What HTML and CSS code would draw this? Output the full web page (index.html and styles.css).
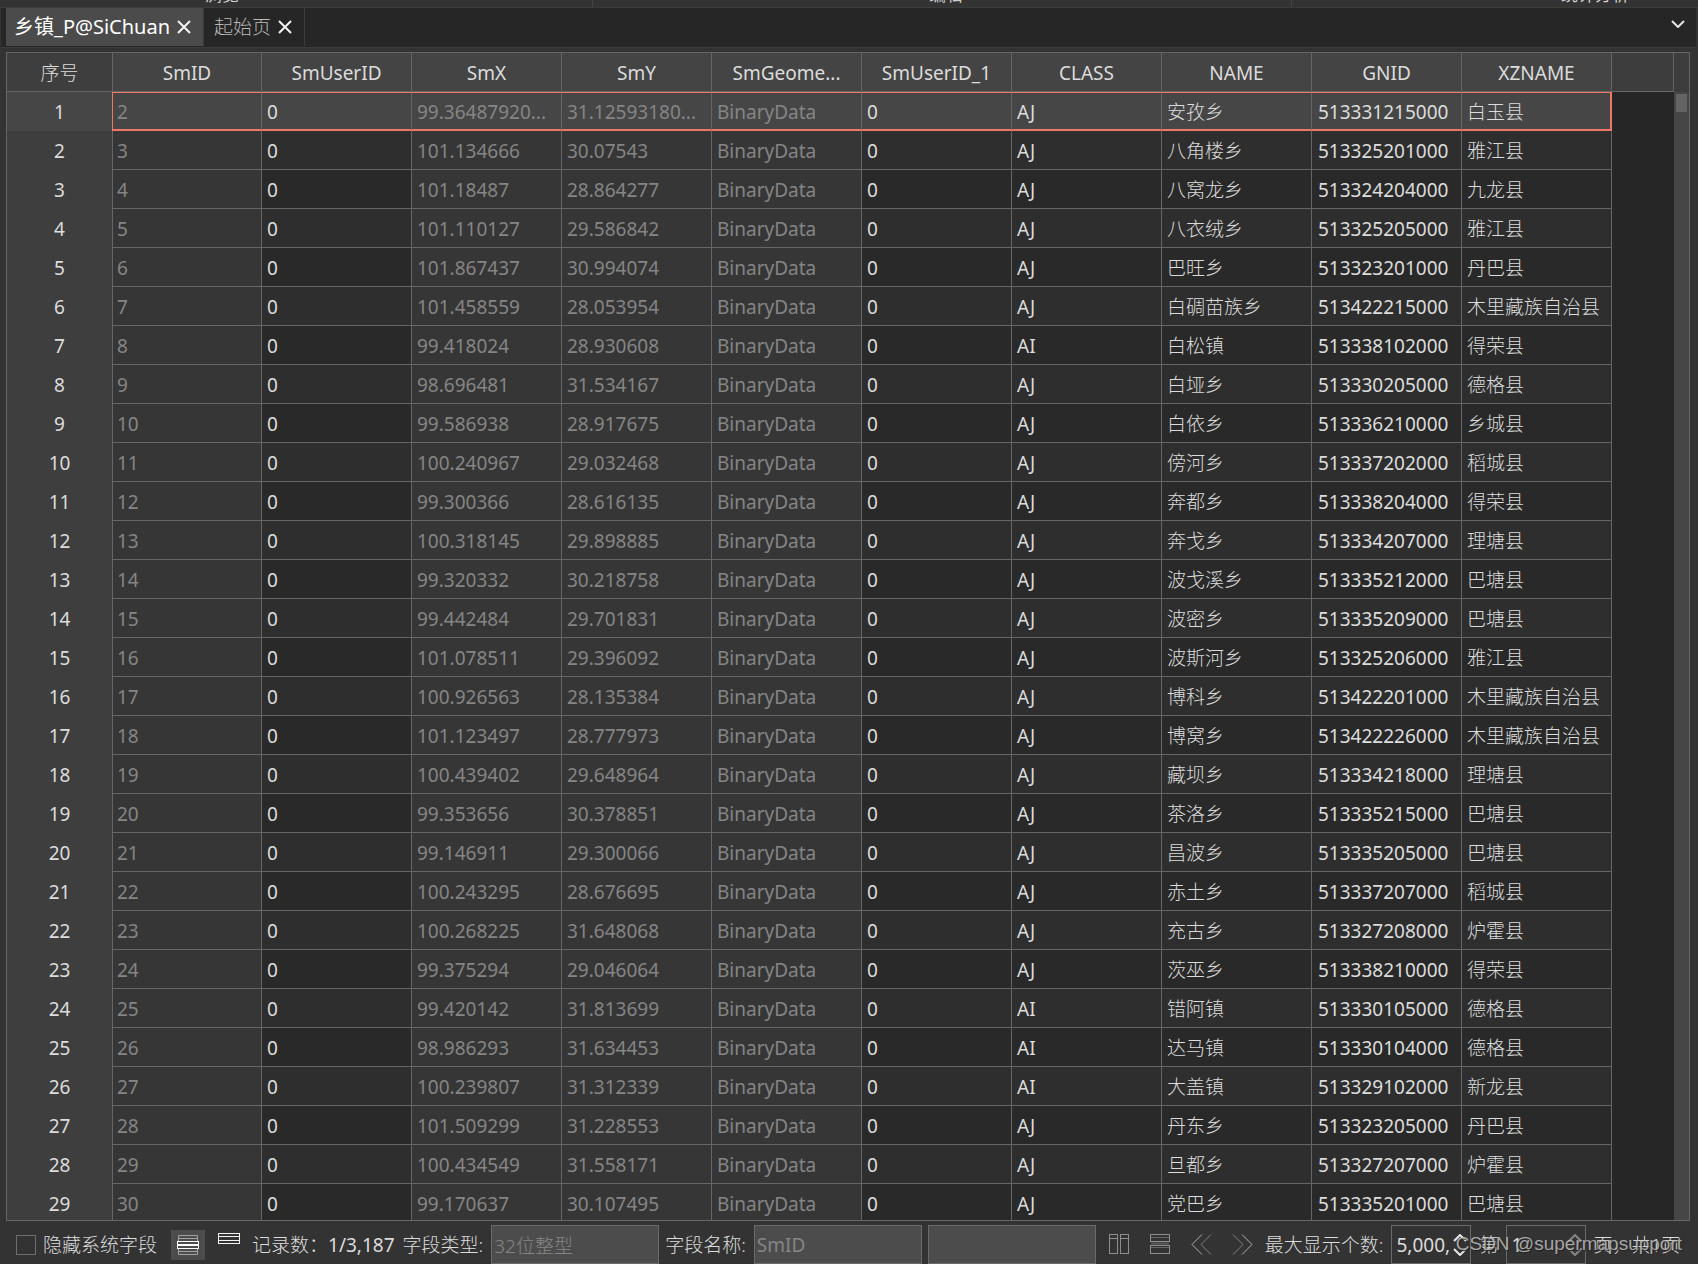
FILE: index.html
```html
<!DOCTYPE html>
<html lang="zh-CN">
<head>
<meta charset="utf-8">
<title>乡镇_P@SiChuan</title>
<link rel="stylesheet" href="styles.css">
</head>
<body>
<div class="ribbon">
  <span class="group">浏览</span>
  <span class="group">编辑</span>
  <span class="group">统计分析</span>
</div>
<main class="dock">
  <nav class="tabs">
    <div class="tab active">
      <a href="#table">乡镇_P@SiChuan</a>
      <button class="close" aria-label="关闭"><svg width="14" height="14" viewBox="0 0 14 14"><path d="M1 1L13 13M13 1L1 13"/></svg></button>
    </div>
    <div class="tab">
      <a href="#start">起始页</a>
      <button class="close" aria-label="关闭"><svg width="14" height="14" viewBox="0 0 14 14"><path d="M1 1L13 13M13 1L1 13"/></svg></button>
    </div>
    <button class="more" aria-label="更多"><svg width="14" height="8" viewBox="0 0 14 8"><path d="M1 1L7 7L13 1"/></svg></button>
  </nav>
  <section class="grid" id="table">
    <div class="view">
      <table>
        <colgroup>
          <col class="c-index"><col class="c-id"><col class="c-field"><col class="c-field"><col class="c-field"><col class="c-field"><col class="c-field"><col class="c-field"><col class="c-field"><col class="c-field"><col class="c-field"><col>
        </colgroup>
        <thead>
          <tr><th>序号</th><th>SmID</th><th>SmUserID</th><th>SmX</th><th>SmY</th><th>SmGeome...</th><th>SmUserID_1</th><th>CLASS</th><th>NAME</th><th>GNID</th><th>XZNAME</th><th></th></tr>
        </thead>
        <tbody id="rows"></tbody>
      </table>
    </div>
    <div class="scroll"><div class="thumb"></div></div>
  </section>
  <footer class="status">
    <label class="check"><input type="checkbox"><span>隐藏系统字段</span></label>
    <button class="tool on" aria-label="表格视图"><svg width="22" height="20" viewBox="0 0 22 20"><g stroke="#a2a2a2"><path d="M1.500 6V.5H20.500V6M1.500 14V19.500H20.500V14M2 3.500H20M2 16.500H20"/></g><g stroke="#fff"><rect x=".5" y="6.500" width="21" height="7"/><path d="M1 9.500H21M1 10.500H21"/></g></svg></button>
    <button class="tool top" aria-label="单条视图"><svg width="22" height="12" viewBox="0 0 22 12"><g stroke="#f4f4f4"><rect x=".5" y=".5" width="21" height="10"/><path d="M1 3.500H21M1 7.500H21"/></g></svg></button>
    <span class="count">记录数：<b>1/3,187</b></span>
    <label class="pair">字段类型: <input class="box" type="text" value="32位整型" readonly></label>
    <label class="pair name">字段名称: <input class="box" type="text" value="SmID" readonly></label>
    <input class="box" type="text" aria-label="字段值" readonly>
    <div class="pager">
      <button aria-label="列布局"><svg width="21" height="21" viewBox="0 0 21 21"><g stroke="#8e8e8e"><rect x=".5" y=".5" width="8" height="19"/><rect x="11.500" y=".5" width="8" height="19"/><path d="M1 4.500H8M12 4.500H19"/></g></svg></button>
      <button aria-label="行布局"><svg width="21" height="21" viewBox="0 0 21 21"><path d="M1 9.500H19" stroke="#5a5a5a" stroke-width="2"/><g stroke="#8e8e8e"><rect x=".5" y=".5" width="19" height="7"/><rect x=".5" y="11.500" width="19" height="8"/><path d="M1 3.500H19M1 13.500H19" stroke="#666"/></g></svg></button>
      <button aria-label="上一页"><svg width="21" height="21" viewBox="0 0 21 21"><path d="M11 .5L1 10.500L11 20.500" stroke="#b0b0b0"/><path d="M20 .5L10 10.500L20 20.500" stroke="#808080"/></svg></button>
      <button aria-label="下一页"><svg width="21" height="21" viewBox="0 0 21 21"><path d="M1 .5L11 10.500L1 20.500" stroke="#808080"/><path d="M10 .5L20 10.500L10 20.500" stroke="#b0b0b0"/></svg></button>
    </div>
    <label class="pair">最大显示个数: <span class="spin"><input type="text" value="5,000,"><svg width="14" height="22" viewBox="0 0 14 22"><path d="M1 7L7 1L13 7M1 15L7 21L13 15" stroke="#e6e6e6" stroke-width="2"/></svg></span></label>
    <label class="pair">第 <span class="spin"><input type="text" value="1"><svg width="14" height="22" viewBox="0 0 14 22"><path d="M1 8V7L7 1L13 7V8M1 14V15L7 21L13 15V14" stroke="#858585" stroke-width="2"/></svg></span></label>
    <span class="total">页，共1页</span>
    <div class="watermark">CSDN @supermapsupport</div>
  </footer>
</main>
<script src="rows.js"></script>
</body>
</html>
```
FILE: rows.js
```js
// One record per line: SmX, SmY, CLASS, NAME, GNID, XZNAME
const records = `
99.36487920...,31.12593180...,AJ,安孜乡,513331215000,白玉县
101.134666,30.07543,AJ,八角楼乡,513325201000,雅江县
101.18487,28.864277,AJ,八窝龙乡,513324204000,九龙县
101.110127,29.586842,AJ,八衣绒乡,513325205000,雅江县
101.867437,30.994074,AJ,巴旺乡,513323201000,丹巴县
101.458559,28.053954,AJ,白碉苗族乡,513422215000,木里藏族自治县
99.418024,28.930608,AI,白松镇,513338102000,得荣县
98.696481,31.534167,AJ,白垭乡,513330205000,德格县
99.586938,28.917675,AJ,白依乡,513336210000,乡城县
100.240967,29.032468,AJ,傍河乡,513337202000,稻城县
99.300366,28.616135,AJ,奔都乡,513338204000,得荣县
100.318145,29.898885,AJ,奔戈乡,513334207000,理塘县
99.320332,30.218758,AJ,波戈溪乡,513335212000,巴塘县
99.442484,29.701831,AJ,波密乡,513335209000,巴塘县
101.078511,29.396092,AJ,波斯河乡,513325206000,雅江县
100.926563,28.135384,AJ,博科乡,513422201000,木里藏族自治县
101.123497,28.777973,AJ,博窝乡,513422226000,木里藏族自治县
100.439402,29.648964,AJ,藏坝乡,513334218000,理塘县
99.353656,30.378851,AJ,茶洛乡,513335215000,巴塘县
99.146911,29.300066,AJ,昌波乡,513335205000,巴塘县
100.243295,28.676695,AJ,赤土乡,513337207000,稻城县
100.268225,31.648068,AJ,充古乡,513327208000,炉霍县
99.375294,29.046064,AJ,茨巫乡,513338210000,得荣县
99.420142,31.813699,AI,错阿镇,513330105000,德格县
98.986293,31.634453,AI,达马镇,513330104000,德格县
100.239807,31.312339,AI,大盖镇,513329102000,新龙县
101.509299,31.228553,AJ,丹东乡,513323205000,丹巴县
100.434549,31.558171,AJ,旦都乡,513327207000,炉霍县
99.170637,30.107495,AJ,党巴乡,513335201000,巴塘县
`.trim().split("\n");

document.getElementById("rows").innerHTML = records.map((line, i) => {
  const [x, y, kind, name, code, county] = line.split(",");
  return `<tr${i === 0 ? ' class="selected"' : ""}><th>${i + 1}</th>` +
    `<td class="sys">${i + 2}</td><td>0</td><td class="sys">${x}</td><td class="sys">${y}</td>` +
    `<td class="sys">BinaryData</td><td>0</td><td>${kind}</td><td class="han">${name}</td>` +
    `<td class="code">${code}</td><td class="han">${county}</td><td class="rest"></td></tr>`;
}).join("");
```
FILE: styles.css
```css
* { box-sizing: border-box; }
body {
  margin: 0;
  height: 100vh;
  display: flex;
  flex-direction: column;
  overflow: hidden;
  background: #333;
  color: #dcdcdc;
  font: 19px/38px "Noto Sans", "Noto Sans CJK SC", sans-serif;
}
button, input { font: inherit; color: inherit; margin: 0; padding: 0; }
button { border: 0; background: none; display: flex; align-items: center; justify-content: center; }
svg { fill: none; stroke: #e6e6e6; display: block; flex: none; }

.ribbon {
  flex: none;
  height: 8px;
  display: flex;
  align-items: flex-end;
  overflow: hidden;
  border-bottom: 1px solid #3b3b3b;
}
.group {
  flex: 1;
  height: 24px;
  border-right: 1px solid #444;
  text-align: center;
  font-size: 17px;
  line-height: 24px;
  color: #d0d0d0;
}
.group:first-child { flex: 0 0 593px; padding: 0 148px 0 0; }
.group:nth-child(2) { flex: 0 0 699px; padding: 0 0 0 8px; }
.group:last-child { border: 0; padding: 0 0 0 200px; }

.dock { flex: 1; min-height: 0; display: flex; flex-direction: column; }
.tabs {
  flex: none;
  height: 40px;
  margin: 0 2px 0 1px;
  padding-left: 5px;
  display: flex;
  background: #262626;
  border-bottom: 1px solid #3b3b3b;
}
.tab {
  display: flex;
  align-items: center;
  gap: 7px;
  height: 38px;
  padding: 0 12px 0 10px;
  border-right: 1px solid #3b3b3b;
  color: #b8b8b8;
}
.tab.active { background: #4b4b4b; color: #fff; padding-left: 8px; font-size: 20px; }
.tab a { color: inherit; text-decoration: none; font-weight: 300; }
.tab.active a { font-weight: 400; }
.close svg { stroke: #f4f4f4; stroke-width: 2; }
.more { margin-left: auto; padding-right: 11px; height: 32px; }
.more svg { stroke-width: 2; }

.grid {
  flex: 1;
  min-height: 0;
  display: flex;
  margin: 4px 8px 0 6px;
  border: 1px solid #666;
  background: #262626;
}
.view { flex: 1; min-width: 0; overflow: hidden; }
table { width: 100%; table-layout: fixed; border-collapse: separate; border-spacing: 0; }
.c-index { width: 106px; }
.c-id { width: 149px; }
.c-field { width: 150px; }
th, td {
  height: 39px;
  padding: 0;
  line-height: 38px;
  white-space: nowrap;
  overflow: hidden;
  border-right: 1px solid #666;
}
th { background: #3e3e3e; font-weight: 400; text-align: center; }
thead th { background: #444; border-bottom: 1px solid #666; padding-top: 2px; line-height: 36px; }
thead th:first-child { background: #3e3e3e; font-weight: 300; }
thead th:last-child { background: #3d3d3d; }
td { padding: 2px 0 0 5px; line-height: 36px; background: #292929; border-bottom: 1px solid #666; }
tr:nth-child(even) td { background: #2e2e2e; }
tr td.sys { background: #363636; color: #858585; }
td:nth-child(2) { padding-left: 4px; }
.han { font-weight: 300; }
.code { padding-left: 6px; }
tr td.rest { background: #262626; border: 0; }
.selected th { background: #464646; border-right-color: #ee7868; }
.selected td, .selected td.sys {
  background: #464646;
  line-height: 34px;
  border-top: 1px solid #ee7868;
  border-bottom: 2px solid #ee7868;
}
.selected td.han:nth-last-child(2) { border-right: 2px solid #ee7868; }
tr.selected td.rest { background: #262626; border: 0; }

.scroll { flex: none; width: 15px; padding: 2px; background: #464646; border-top: 39px solid #3d3d3d; }
.thumb { height: 18px; background: #646464; }

.status {
  flex: none;
  position: relative;
  height: 43px;
  padding: 4px 0 0 16px;
  display: flex;
  align-items: center;
  white-space: nowrap;
}
.status > * { flex: none; }
.check { display: flex; align-items: center; gap: 7px; font-weight: 300; }
.check input { appearance: none; width: 20px; height: 20px; border: 1px solid #6e6e6e; }
.tool { width: 34px; height: 30px; }
.tool.on { margin-left: 14px; background: #4c4c4c; }
.tool.top { width: 22px; margin-left: 13px; align-items: flex-start; padding-top: 3px; }
.count { margin-left: 12px; font-weight: 300; }
.count b { font-weight: 400; }
.pair { display: flex; align-items: center; gap: 8px; margin-left: 8px; font-weight: 300; }
.pair.name { margin-left: 6px; }
.box {
  width: 168px;
  height: 39px;
  padding: 0 2px;
  border: 1px solid #6a6a6a;
  background: #4c4c4c;
  color: #858585;
}
.name .box { font-weight: 400; }
.status > .box { margin-left: 6px; }
.pager { display: flex; gap: 20px; margin: 0 12px 0 13px; }
.pager + .pair { margin-left: 0; }
.spin {
  display: flex;
  align-items: center;
  width: 80px;
  height: 39px;
  padding: 0 3px 0 4px;
  border: 1px solid #6a6a6a;
}
.spin input { flex: 1; min-width: 0; border: 0; background: none; font-weight: 400; }
.total { margin-left: 7px; font-weight: 300; }
.watermark {
  position: absolute;
  right: 16px;
  top: 11px;
  font: 19px/24px "Liberation Sans", sans-serif;
  color: rgba(200, 200, 200, .8);
  text-shadow: 1px 1px 1px #222;
}
```
